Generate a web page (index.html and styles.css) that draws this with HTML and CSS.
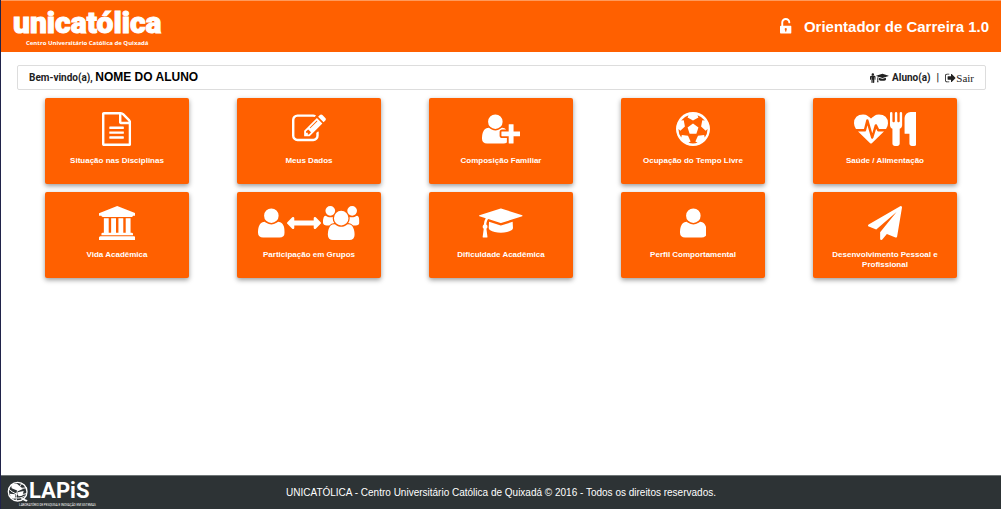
FILE: index.html
```
<!DOCTYPE html>
<html lang="pt-BR">
<head>
<meta charset="utf-8">
<title>Orientador de Carreira</title>
<link rel="stylesheet" href="styles.css">
</head>
<body>
<svg class="sprite" aria-hidden="true">
  <symbol id="i-file" viewBox="0 0 1536 1792"><path transform="matrix(1 0 0 -1 0 1536)" d="M1468 1156q28 -28 48 -76t20 -88v-1152q0 -40 -28 -68t-68 -28h-1344q-40 0 -68 28t-28 68v1600q0 40 28 68t68 28h896q40 0 88 -20t76 -48zM1024 1400v-376h376q-10 29 -22 41l-313 313q-12 12 -41 22zM1408 -128v1024h-416q-40 0 -68 28t-28 68v416h-768v-1536h1280zM384 736q0 14 9 23t23 9h704q14 0 23 -9t9 -23v-64q0 -14 -9 -23t-23 -9h-704q-14 0 -23 9t-9 23v64zM1120 512q14 0 23 -9t9 -23v-64q0 -14 -9 -23t-23 -9h-704q-14 0 -23 9t-9 23v64q0 14 9 23t23 9h704zM1120 256q14 0 23 -9t9 -23v-64q0 -14 -9 -23t-23 -9h-704q-14 0 -23 9t-9 23v64q0 14 9 23t23 9h704z"/></symbol>
  <symbol id="i-edit" viewBox="0 0 1792 1792"><path transform="matrix(1 0 0 -1 0 1536)" d="M888 352l116 116l-152 152l-116 -116v-56h96v-96h56zM1328 1072q-16 16 -33 -1l-350 -350q-17 -17 -1 -33t33 1l350 350q17 17 1 33zM1408 478v-190q0 -119 -84.5 -203.5t-203.5 -84.5h-832q-119 0 -203.5 84.5t-84.5 203.5v832q0 119 84.5 203.5t203.5 84.5h832q63 0 117 -25q15 -7 18 -23q3 -17 -9 -29l-49 -49q-14 -14 -32 -8q-23 6 -45 6h-832q-66 0 -113 -47t-47 -113v-832q0 -66 47 -113t113 -47h832q66 0 113 47t47 113v126q0 13 9 22l64 64q15 15 35 7t20 -29zM1312 1216l288 -288l-672 -672h-288v288zM1756 1084l-92 -92l-288 288l92 92q28 28 68 28t68 -28l152 -152q28 -28 28 -68t-28 -68z"/></symbol>
  <symbol id="i-user-plus" viewBox="0 0 2048 1792"><path transform="matrix(1 0 0 -1 0 1536)" d="M704 640q-159 0 -271.5 112.5t-112.5 271.5t112.5 271.5t271.5 112.5t271.5 -112.5t112.5 -271.5t-112.5 -271.5t-271.5 -112.5zM1664 512h352q13 0 22.5 -9.5t9.5 -22.5v-192q0 -13 -9.5 -22.5t-22.5 -9.5h-352v-352q0 -13 -9.5 -22.5t-22.5 -9.5h-192q-13 0 -22.5 9.5t-9.5 22.5v352h-352q-13 0 -22.5 9.5t-9.5 22.5v192q0 13 9.5 22.5t22.5 9.5h352v352q0 13 9.5 22.5t22.5 9.5h192q13 0 22.5 -9.5t9.5 -22.5v-352zM928 288q0 -52 38 -90t90 -38h256v-238q-68 -50 -171 -50h-874q-121 0 -194 69t-73 190q0 53 3.5 103.5t14 109t26.5 108.5t43 97.5t62 81t85.5 53.5t111.5 20q19 0 39 -17q79 -61 154.5 -91.5t164.5 -30.5t164.5 30.5t154.5 91.5q20 17 39 17q132 0 217 -96h-223q-52 0 -90 -38t-38 -90v-192z"/></symbol>
  <symbol id="i-ball" viewBox="0 0 1792 1792"><path transform="matrix(1 0 0 -1 0 1536)" d="M609 720l287 208l287 -208l-109 -336h-355zM896 1536q182 0 348 -71t286 -191t191 -286t71 -348t-71 -348t-191 -286t-286 -191t-348 -71t-348 71t-286 191t-191 286t-71 348t71 348t191 286t286 191t348 71zM1515 186q149 203 149 454v3l-102 -89l-240 224l63 323l134 -12q-150 206 -389 282l53 -124l-287 -159l-287 159l53 124q-239 -76 -389 -282l135 12l62 -323l-240 -224l-102 89v-3q0 -251 149 -454l30 132l326 -40l139 -298l-116 -69q117 -39 240 -39t240 39l-116 69l139 298l326 40z"/></symbol>
  <symbol id="i-heart" viewBox="0 0 1792 1792"><path transform="matrix(1 0 0 -1 0 1536)" d="M1280 512h305q-5 -6 -10 -10.5t-9 -7.5l-3 -4l-623 -600q-18 -18 -44 -18t-44 18l-624 602q-5 2 -21 20h369q22 0 39.5 13.5t22.5 34.5l70 281l190 -667q6 -20 23 -33t39 -13q21 0 38 13t23 33l146 485l56 -112q18 -35 57 -35zM1792 940q0 -145 -103 -300h-369l-111 221q-8 17 -25.5 27t-36.5 8q-45 -5 -56 -46l-129 -430l-196 686q-6 20 -23.5 33t-39.5 13t-39 -13.5t-22 -34.5l-116 -464h-423q-103 155 -103 300q0 220 127 344t351 124q62 0 126.5 -21.5t120 -58t95.5 -68.5t76 -68q36 36 76 68t95.5 68.5t120 58t126.5 21.5q224 0 351 -124t127 -344z"/></symbol>
  <symbol id="i-cutlery" viewBox="0 0 1408 1792"><path transform="matrix(1 0 0 -1 0 1536)" d="M640 1472v-640q0 -61 -35.5 -111t-92.5 -70v-779q0 -52 -38 -90t-90 -38h-128q-52 0 -90 38t-38 90v779q-57 20 -92.5 70t-35.5 111v640q0 26 19 45t45 19t45 -19t19 -45v-416q0 -26 19 -45t45 -19t45 19t19 45v416q0 26 19 45t45 19t45 -19t19 -45v-416q0 -26 19 -45t45 -19t45 19t19 45v416q0 26 19 45t45 19t45 -19t19 -45zM1408 1472v-1600q0 -52 -38 -90t-90 -38h-128q-52 0 -90 38t-38 90v512h-224q-13 0 -22.5 9.5t-9.5 22.5v800q0 132 94 226t226 94h256q26 0 45 -19t19 -45z"/></symbol>
  <symbol id="i-university" viewBox="0 0 1920 1792"><path transform="matrix(1 0 0 -1 0 1536)" d="M960 1536l960 -384v-128h-128q0 -26 -20.5 -45t-48.5 -19h-1526q-28 0 -48.5 19t-20.5 45h-128v128zM256 896h256v-768h128v768h256v-768h128v768h256v-768h128v768h256v-768h59q28 0 48.5 -19t20.5 -45v-64h-1664v64q0 26 20.5 45t48.5 19h59v768zM1851 -64q28 0 48.5 -19t20.5 -45v-128h-1920v128q0 26 20.5 45t48.5 19h1782z"/></symbol>
  <symbol id="i-user" viewBox="0 0 1408 1792"><path transform="matrix(1 0 0 -1 0 1536)" d="M1408 131q0 -120 -73 -189.5t-194 -69.5h-874q-121 0 -194 69.5t-73 189.5q0 53 3.5 103.5t14 109t26.5 108.5t43 97.5t62 81t85.5 53.5t111.5 20q9 0 42 -21.5t74.5 -48t108 -48t133.5 -21.5t133.5 21.5t108 48t74.5 48t42 21.5q61 0 111.5 -20t85.5 -53.5t62 -81t43 -97.5t26.5 -108.5t14 -109t3.5 -103.5zM1088 1024q0 -159 -112.5 -271.5t-271.5 -112.5t-271.5 112.5t-112.5 271.5t112.5 271.5t271.5 112.5t271.5 -112.5t112.5 -271.5z"/></symbol>
  <symbol id="i-arrows" viewBox="0 0 1792 1792"><path transform="matrix(1 0 0 -1 0 1536)" d="M1792 640q0 -26 -19 -45l-256 -256q-19 -19 -45 -19t-45 19t-19 45v128h-1024v-128q0 -26 -19 -45t-45 -19t-45 19l-256 256q-19 19 -19 45t19 45l256 256q19 19 45 19t45 -19t19 -45v-128h1024v128q0 26 19 45t45 19t45 -19l256 -256q19 -19 19 -45z"/></symbol>
  <symbol id="i-users" viewBox="0 0 1920 1792"><path transform="matrix(1 0 0 -1 0 1536)" d="M593 640q-162 -5 -265 -128h-134q-82 0 -138 40.5t-56 118.5q0 353 124 353q6 0 43.5 -21t97.5 -42.5t119 -21.5q67 0 133 23q-5 -37 -5 -66q0 -139 81 -256zM1664 3q0 -120 -73 -189.5t-194 -69.5h-874q-121 0 -194 69.5t-73 189.5q0 53 3.5 103.5t14 109t26.5 108.5t43 97.5t62 81t85.5 53.5t111.5 20q10 0 43 -21.5t73 -48t107 -48t135 -21.5t135 21.5t107 48t73 48t43 21.5q61 0 111.5 -20t85.5 -53.5t62 -81t43 -97.5t26.5 -108.5t14 -109t3.5 -103.5zM640 1280q0 -106 -75 -181t-181 -75t-181 75t-75 181t75 181t181 75t181 -75t75 -181zM1344 896q0 -159 -112.5 -271.5t-271.5 -112.5t-271.5 112.5t-112.5 271.5t112.5 271.5t271.5 112.5t271.5 -112.5t112.5 -271.5zM1920 671q0 -78 -56 -118.5t-138 -40.5h-134q-103 123 -265 128q81 117 81 256q0 29 -5 66q66 -23 133 -23q59 0 119 21.5t97.5 42.5t43.5 21q124 0 124 -353zM1792 1280q0 -106 -75 -181t-181 -75t-181 75t-75 181t75 181t181 75t181 -75t75 -181z"/></symbol>
  <symbol id="i-cap" viewBox="0 0 2304 1792"><path transform="matrix(1 0 0 -1 0 1536)" d="M1774 700l18 -316q4 -69 -82 -128t-235 -93.5t-323 -34.5t-323 34.5t-235 93.5t-82 128l18 316l574 -181q22 -7 48 -7t48 7zM2304 1024q0 -23 -22 -31l-1120 -352q-4 -1 -10 -1t-10 1l-652 206q-43 -34 -71 -111.5t-34 -178.5q63 -36 63 -109q0 -69 -58 -107l58 -433q2 -14 -8 -25q-9 -11 -24 -11h-192q-15 0 -24 11q-10 11 -8 25l58 433q-58 38 -58 107q0 73 65 111q11 207 98 330l-333 104q-22 8 -22 31t22 31l1120 352q4 1 10 1t10 -1l1120 -352q22 -8 22 -31z"/></symbol>
  <symbol id="i-plane" viewBox="0 0 1792 1792"><path transform="matrix(1 0 0 -1 0 1536)" d="M1764 1525q33 -24 27 -64l-256 -1536q-5 -29 -32 -45q-14 -8 -31 -8q-11 0 -24 5l-453 185l-242 -295q-18 -23 -49 -23q-13 0 -22 4q-19 7 -30.5 23.5t-11.5 36.5v349l864 1059l-1069 -925l-395 162q-37 14 -40 55q-2 40 32 59l1664 960q15 9 32 9q20 0 36 -11z"/></symbol>
  <symbol id="i-unlock" viewBox="0 0 1152 1792"><path transform="matrix(1 0 0 -1 0 1536)" fill-rule="evenodd" d="M1056 768q40 0 68 -28t28 -68v-576q0 -40 -28 -68t-68 -28h-960q-40 0 -68 28t-28 68v576q0 40 28 68t68 28h32v320q0 185 131.5 316.5t316.5 131.5t316.5 -131.5t131.5 -316.5q0 -26 -19 -45t-45 -19h-64q-26 0 -45 19t-19 45q0 106 -75 181t-181 75t-181 -75t-75 -181v-320h736zM576 540a110 110 0 0 0 64 -200v-100q0 -64 -64 -64t-64 64v100a110 110 0 0 0 64 200z"/></symbol>
  <symbol id="i-male" viewBox="0 0 1024 1792"><path transform="matrix(1 0 0 -1 0 1536)" d="M1024 832v-416q0 -40 -28 -68t-68 -28t-68 28t-28 68v352h-64v-912q0 -46 -33 -79t-79 -33t-79 33t-33 79v464h-64v-464q0 -46 -33 -79t-79 -33t-79 33t-33 79v912h-64v-352q0 -40 -28 -68t-68 -28t-68 28t-28 68v416q0 80 56 136t136 56h640q80 0 136 -56t56 -136zM736 1280q0 -93 -65.5 -158.5t-158.5 -65.5t-158.5 65.5t-65.5 158.5t65.5 158.5t158.5 65.5t158.5 -65.5t65.5 -158.5z"/></symbol>
  <symbol id="i-exit" viewBox="0 0 1664 1792"><path transform="matrix(1 0 0 -1 0 1536)" d="M640 96q0 -4 1 -20t0.5 -26.5t-3 -23.5t-10 -19.5t-20.5 -6.5h-320q-119 0 -203.5 84.5t-84.5 203.5v704q0 119 84.5 203.5t203.5 84.5h320q13 0 22.5 -9.5t9.5 -22.5q0 -4 1 -20t0.5 -26.5t-3 -23.5t-10 -19.5t-20.5 -6.5h-320q-66 0 -113 -47t-47 -113v-704q0 -66 47 -113t113 -47h288h11h13t11.5 -1t11.5 -3t8 -5.5t7 -9t2 -13.5zM1568 640q0 -26 -19 -45l-544 -544q-19 -19 -45 -19t-45 19t-19 45v288h-448q-26 0 -45 19t-19 45v384q0 26 19 45t45 19h448v288q0 26 19 45t45 19t45 -19l544 -544q19 -19 19 -45z"/></symbol>
</svg>

<header class="topbar">
  <a class="brand" href="#">
    <span class="brand-name">unicatólica</span>
    <span class="brand-sub">Centro Universitário Católica de Quixadá</span>
  </a>
  <h1 class="app-title"><svg class="lock" viewBox="0 0 1152 1792"><use href="#i-unlock"/></svg>Orientador de Carreira 1.0</h1>
</header>

<main class="content">
  <div class="welcome">
    <p class="greeting">Bem-vindo(a), <span class="student">NOME DO ALUNO</span></p>
    <div class="session">
      <svg class="mini" viewBox="0 0 1024 1792"><use href="#i-male"/></svg><svg class="mini" viewBox="0 0 2304 1792"><use href="#i-cap"/></svg>
      <span class="role">Aluno(a)</span>
      <span class="divider">|</span>
      <a class="logout" href="#"><svg class="mini" viewBox="0 0 1664 1792"><use href="#i-exit"/></svg>Sair</a>
    </div>
  </div>

  <nav class="tiles">
    <a class="tile" href="#"><span class="icons"><svg class="icon" viewBox="0 0 1536 1792"><use href="#i-file"/></svg></span><span class="label">Situação nas Disciplinas</span></a>
    <a class="tile" href="#"><span class="icons"><svg class="icon" viewBox="0 0 1792 1792"><use href="#i-edit"/></svg></span><span class="label">Meus Dados</span></a>
    <a class="tile" href="#"><span class="icons"><svg class="icon" viewBox="0 0 2048 1792"><use href="#i-user-plus"/></svg></span><span class="label">Composição Familiar</span></a>
    <a class="tile" href="#"><span class="icons"><svg class="icon" viewBox="0 0 1792 1792"><use href="#i-ball"/></svg></span><span class="label">Ocupação do Tempo Livre</span></a>
    <a class="tile" href="#"><span class="icons"><svg class="icon" viewBox="0 0 1792 1792"><use href="#i-heart"/></svg><svg class="icon" viewBox="0 0 1408 1792"><use href="#i-cutlery"/></svg></span><span class="label">Saúde / Alimentação</span></a>
    <a class="tile" href="#"><span class="icons"><svg class="icon" viewBox="0 0 1920 1792"><use href="#i-university"/></svg></span><span class="label">Vida Acadêmica</span></a>
    <a class="tile" href="#"><span class="icons"><svg class="icon" viewBox="0 0 1408 1792"><use href="#i-user"/></svg><svg class="icon" viewBox="0 0 1792 1792"><use href="#i-arrows"/></svg><svg class="icon" viewBox="0 0 1920 1792"><use href="#i-users"/></svg></span><span class="label">Participação em Grupos</span></a>
    <a class="tile" href="#"><span class="icons"><svg class="icon" viewBox="0 0 2304 1792"><use href="#i-cap"/></svg></span><span class="label">Dificuldade Acadêmica</span></a>
    <a class="tile" href="#"><span class="icons"><svg class="icon" viewBox="0 0 1408 1792"><use href="#i-user"/></svg></span><span class="label">Perfil Comportamental</span></a>
    <a class="tile" href="#"><span class="icons"><svg class="icon" viewBox="0 0 1792 1792"><use href="#i-plane"/></svg></span><span class="label">Desenvolvimento Pessoal e Profissional</span></a>
  </nav>
</main>

<footer class="footer">
  <a class="lapis" href="#">
    <svg class="globe" viewBox="0 0 66 72" aria-hidden="true">
      <g fill="none" stroke="#fff" stroke-width="4" stroke-linecap="round">
        <circle cx="32" cy="32" r="28"/>
        <path d="M14 12C26 22 44 24 58 20M8 26C18 38 38 44 58 38M10 46C22 52 40 54 52 46M44 8C34 20 24 42 28 58" stroke-width="3"/>
      </g>
      <path fill="#fff" d="M12 10L30 8L48 24L34 30L14 22ZM8 38L26 40L22 54L12 50ZM32 34L50 30L46 44L34 46ZM44 50L62 58L58 62L42 54Z"/>
    </svg>
    <span class="lapis-text"><span class="lapis-name">LAPiS</span><span class="lapis-sub">LABORATÓRIO DE PESQUISA E INOVAÇÃO EM SISTEMAS</span></span>
  </a>
  <p class="copyright">UNICATÓLICA - Centro Universitário Católica de Quixadá © 2016 - Todos os direitos reservados.</p>
</footer>
</body>
</html>
```
FILE: styles.css
```
* {
  box-sizing: border-box;
}

body {
  margin: 0;
  min-height: 100vh;
  display: flex;
  flex-direction: column;
  border-left: 1px solid #20234a;
  background: #fff;
  color: #222;
  font-family: "Liberation Sans", Arial, sans-serif;
}

a {
  color: inherit;
  text-decoration: none;
}

p,
h1 {
  margin: 0;
}

svg {
  fill: currentColor;
}

.sprite {
  display: none;
}

.topbar {
  display: flex;
  justify-content: space-between;
  align-items: center;
  height: 52px;
  padding: 0 12px;
  border-top: 1px solid #ff9a5c;
  background: #ff6000;
  color: #fff;
}

.brand {
  display: flex;
  flex-direction: column;
  align-items: center;
}

.brand-name {
  font: 900 30px/32px Roboto, sans-serif;
  -webkit-text-stroke: 1px #fff;
}

.brand-sub {
  font: bold 6px/8px "Open Sans", sans-serif;
}

.app-title {
  display: flex;
  align-items: center;
  gap: 12px;
  font-size: 15px;
  line-height: 20px;
}

.lock {
  height: 18px;
}

.content {
  flex: 1;
}

.welcome {
  display: flex;
  justify-content: space-between;
  align-items: center;
  height: 25px;
  margin: 13px 15px 8px 16px;
  padding: 0 11px;
  border: 1px solid #ddd;
  border-radius: 2px;
  font: bold 10px/14px Roboto, sans-serif;
}

.student {
  color: #000;
  font: bold 12px/14px "Liberation Sans", Arial, sans-serif;
}

.session {
  display: flex;
  align-items: center;
}

.mini {
  height: 10px;
}

.role {
  margin-left: 3px;
}

.divider {
  margin: 0 6px;
}

.logout {
  display: flex;
  align-items: center;
  font: 11px/12px "Liberation Serif", serif;
}

.logout .mini {
  height: 12px;
}

.tiles {
  display: grid;
  grid-template-columns: repeat(5, 1fr);
  justify-items: center;
  gap: 8px 0;
  padding: 0 20px;
}

.tile {
  width: 75%;
  min-height: 86px;
  padding: 14px 12px 7px;
  border-radius: 2px;
  background: #ff6000;
  box-shadow: 0 2px 5px rgba(0, 0, 0, 0.4);
  color: #fff;
  text-align: center;
}

.icons {
  display: flex;
  justify-content: center;
  gap: 2px;
  margin-bottom: 10px;
}

.icon {
  height: 34px;
}

.label {
  display: block;
  font-size: 8px;
  font-weight: bold;
  line-height: 10px;
}

.footer {
  display: grid;
  grid-template-columns: 1fr auto 1fr;
  align-items: center;
  height: 34px;
  padding: 0 6px;
  border-top: 1px solid #6f7677;
  background: #2d3335;
  color: #fff;
}

.lapis {
  display: flex;
  align-items: center;
}

.globe {
  height: 24px;
}

.lapis-text {
  display: flex;
  flex-direction: column;
}

.lapis-name {
  font: bold 22px/24px Roboto, sans-serif;
}

.lapis-sub {
  margin-left: -10px;
  font: 3px/4px Roboto, sans-serif;
}

.copyright {
  font-size: 10px;
}
```
